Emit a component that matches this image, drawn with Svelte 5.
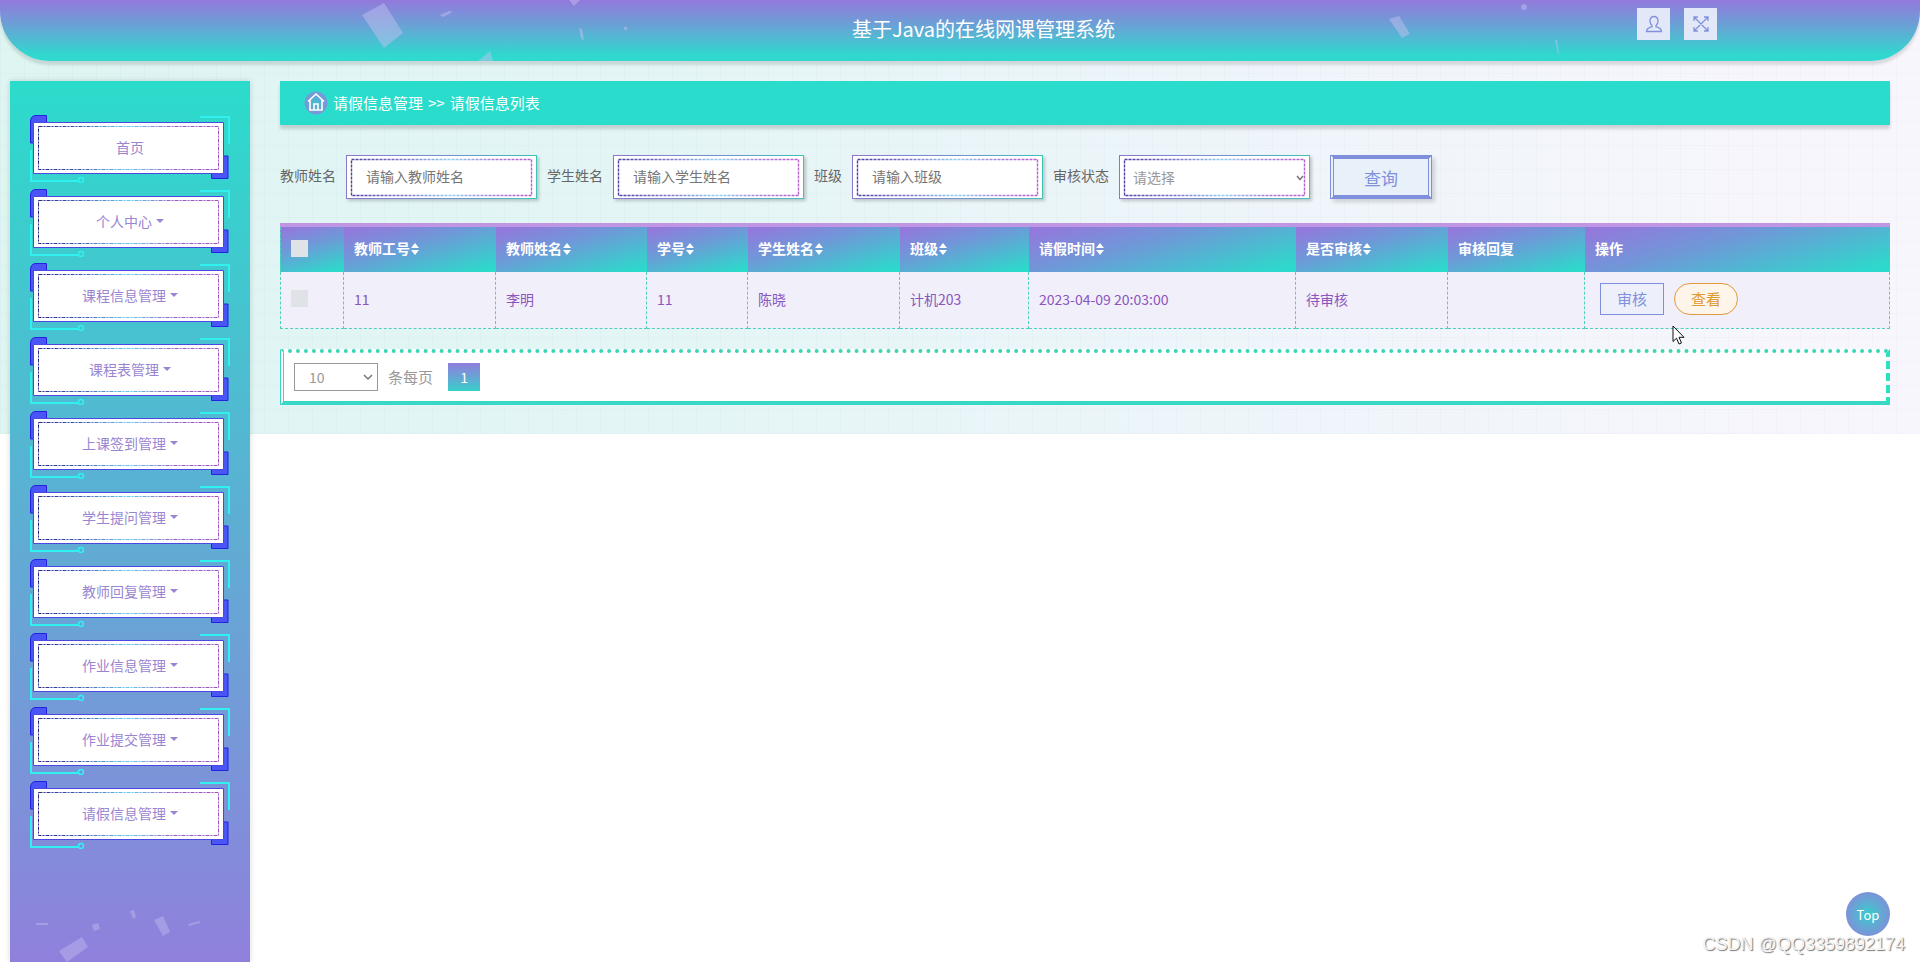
<script lang="ts">
	interface MenuItem {
		label: string;
		expandable: boolean;
	}

	interface Column {
		key: string;
		label: string;
		sortable: boolean;
		width: number;
	}

	const menu: MenuItem[] = [
		{ label: '首页', expandable: false },
		{ label: '个人中心', expandable: true },
		{ label: '课程信息管理', expandable: true },
		{ label: '课程表管理', expandable: true },
		{ label: '上课签到管理', expandable: true },
		{ label: '学生提问管理', expandable: true },
		{ label: '教师回复管理', expandable: true },
		{ label: '作业信息管理', expandable: true },
		{ label: '作业提交管理', expandable: true },
		{ label: '请假信息管理', expandable: true },
	];

	const columns: Column[] = [
		{ key: 'teacherNo', label: '教师工号', sortable: true, width: 152 },
		{ key: 'teacherName', label: '教师姓名', sortable: true, width: 151 },
		{ key: 'studentNo', label: '学号', sortable: true, width: 101 },
		{ key: 'studentName', label: '学生姓名', sortable: true, width: 152 },
		{ key: 'className', label: '班级', sortable: true, width: 129 },
		{ key: 'leaveTime', label: '请假时间', sortable: true, width: 267 },
		{ key: 'status', label: '是否审核', sortable: true, width: 152 },
		{ key: 'reply', label: '审核回复', sortable: false, width: 137 },
	];

	const rows: Record<string, string>[] = [
		{
			teacherNo: '11',
			teacherName: '李明',
			studentNo: '11',
			studentName: '陈晓',
			className: '计机203',
			leaveTime: '2023-04-09 20:03:00',
			status: '待审核',
			reply: '',
		},
	];

	const textFilters = [
		{ id: 'teacher', label: '教师姓名', placeholder: '请输入教师姓名' },
		{ id: 'student', label: '学生姓名', placeholder: '请输入学生姓名' },
		{ id: 'class', label: '班级', placeholder: '请输入班级' },
	];

	let filters = $state<Record<string, string>>({ teacher: '', student: '', class: '' });
	let auditStatus = $state('');
	let pageSize = $state('10');
	let selected = $state<boolean[]>(rows.map(() => false));

	let allSelected = $derived(selected.every(Boolean));

	function toggleAll() {
		const next = !allSelected;
		selected = rows.map(() => next);
	}

	function scrollTop() {
		window.scrollTo({ top: 0, behavior: 'smooth' });
	}
</script>

<div class="page">
	<header class="topbar">
		<svg class="confetti" width="1600" height="61" viewBox="0 0 1600 61" aria-hidden="true">
			<g fill="#c9c4f2" fill-opacity="0.45">
				<path d="M384 3 403 33 384 48 362 15z" />
				<path d="M440 15 449 11 453 12 443 17z" />
				<path d="M569 0H580L574 6z" />
				<path d="M478 61 490 51 493 61z" />
				<path d="M579 28 582 29 584 40 581 39z" />
				<path d="M624 27h3v3h-3z" />
				<path d="M1389 19 1399 16 1410 34 1402 38z" />
				<circle cx="1524" cy="7" r="3" />
				<path d="M1555 40h2l2 14h-1z" />
			</g>
		</svg>
		<h1>基于Java的在线网课管理系统</h1>
		<div class="tools">
			<button class="tool" aria-label="个人中心">
				<svg width="18" height="18" viewBox="0 0 18 18">
					<path d="M9 1.500c-2.600 0-4 1.900-4 4.400 0 2 .8 3.700 2 4.600v1.200c-2.700.7-5.300 1.900-5.500 4.800h15c-.2-2.900-2.800-4.100-5.500-4.800v-1.200c1.200-.9 2-2.600 2-4.600 0-2.500-1.400-4.400-4-4.400z" />
				</svg>
			</button>
			<button class="tool" aria-label="全屏">
				<svg width="18" height="18" viewBox="0 0 18 18">
					<path d="M2 2 16 16M16 2 2 16M2 6V2H6M12 2h4v4M16 12v4h-4M6 16H2v-4" />
				</svg>
			</button>
		</div>
	</header>

	<div class="body">
		<aside class="sidebar">
			<nav>
				<ul>
					{#each menu as item}
						<li>
							<a href="#menu">
								{item.label}{#if item.expandable}<span class="caret"></span>{/if}
							</a>
						</li>
					{/each}
				</ul>
			</nav>
		</aside>

		<main>
			<div class="breadcrumb">
				<svg width="24" height="24" viewBox="0 0 24 24" aria-hidden="true">
					<defs>
						<radialGradient id="home-glow">
							<stop offset="0" stop-color="#3fc0d0" />
							<stop offset="0.7" stop-color="#6f9ed8" />
							<stop offset="0.9" stop-color="#8f86dc" stop-opacity="0.8" />
							<stop offset="1" stop-color="#8f86dc" stop-opacity="0" />
						</radialGradient>
					</defs>
					<circle cx="12" cy="12" r="12" fill="url(#home-glow)" />
					<path d="M4 10.500 12 3l8 7.500M6 9v10h12V9M10 19v-6h4v6" fill="none" stroke="#fff" stroke-width="1.600" />
				</svg>
				<span>请假信息管理</span>
				<span>&gt;&gt;</span>
				<span>请假信息列表</span>
			</div>

			<form class="filters" onsubmit={(e) => e.preventDefault()}>
				{#each textFilters as f}
					<label for={f.id}>{f.label}</label>
					<input class="field" id={f.id} type="text" placeholder={f.placeholder} bind:value={filters[f.id]} />
				{/each}
				<label for="audit">审核状态</label>
				<select class="field" id="audit" bind:value={auditStatus}>
					<option value="">请选择</option>
					<option value="pass">通过</option>
					<option value="reject">不通过</option>
				</select>
				<button class="query" type="submit">查询</button>
			</form>

			<table>
				<colgroup>
					<col style="width: 64px" />
					{#each columns as col}
						<col style="width: {col.width}px" />
					{/each}
					<col />
				</colgroup>
				<thead>
					<tr>
						<th><input type="checkbox" aria-label="全选" checked={allSelected} onchange={toggleAll} /></th>
						{#each columns as col}
							<th>
								{col.label}{#if col.sortable}<svg class="sort" width="10" height="12" viewBox="0 0 10 12" aria-hidden="true"><path d="M5 0 9 5H1zM5 12 1 7h8z" fill="#fff" /></svg>{/if}
							</th>
						{/each}
						<th>操作</th>
					</tr>
				</thead>
				<tbody>
					{#each rows as row, i}
						<tr>
							<td><input type="checkbox" aria-label="选择" bind:checked={selected[i]} /></td>
							{#each columns as col}
								<td>{row[col.key]}</td>
							{/each}
							<td>
								<div class="ops">
									<button class="audit">审核</button>
									<button class="view">查看</button>
								</div>
							</td>
						</tr>
					{/each}
				</tbody>
			</table>

			<div class="pager">
				<select id="page-size" bind:value={pageSize}>
					<option value="10">10</option>
					<option value="25">25</option>
					<option value="50">50</option>
				</select>
				<label for="page-size">条每页</label>
				<button class="current">1</button>
			</div>
		</main>
	</div>

	<button class="to-top" onclick={scrollTop}>Top</button>
	<div class="watermark">CSDN @QQ3359892174</div>
	<svg class="pointer" width="13" height="20" viewBox="0 0 13 20" aria-hidden="true">
		<path d="M1 1v15.500l3.500-3.300L7 19l2.500-1L7 12.300h5z" fill="#fff" stroke="#111" />
	</svg>
</div>

<style>
	:global(body) {
		background: #fff;
	}

	.page {
		--teal: #2bdccb;
		--blue: #7f8fdc;
		--purple: #9379dc;
		--field-frame: url("data:image/svg+xml,%3Csvg xmlns='http://www.w3.org/2000/svg' width='189' height='42' fill='none'%3E%3Cdefs%3E%3ClinearGradient id='g' gradientUnits='userSpaceOnUse' x1='4' y1='0' x2='184' y2='0'%3E%3Cstop offset='0' stop-color='%234a40a8'/%3E%3Cstop offset='.3' stop-color='%238078cc'/%3E%3Cstop offset='.55' stop-color='%2390d0f0'/%3E%3Cstop offset='.8' stop-color='%23a880d4'/%3E%3Cstop offset='1' stop-color='%23b860cc'/%3E%3C/linearGradient%3E%3C/defs%3E%3Cpath d='M4.500 3.500H184.500V39.500H4.500z' stroke='url(%23g)' stroke-width='1.400' stroke-dasharray='3 1'/%3E%3C/svg%3E");
		position: relative;
		display: flex;
		flex-direction: column;
		min-height: 100vh;
		overflow: hidden;
		background:
			repeating-linear-gradient(90deg, rgba(120, 150, 180, 0.04) 0 1px, transparent 1px 24px) 0 0 / 100% 434px no-repeat,
			repeating-linear-gradient(0deg, rgba(120, 150, 180, 0.04) 0 1px, transparent 1px 24px) 0 0 / 100% 434px no-repeat,
			linear-gradient(85deg, #def5f2 0%, #e4f5f6 35%, #eef5fa 65%, #f8f6fd 95%) 0 0 / 100% 434px no-repeat;
		font-family: 'Noto Sans CJK SC', sans-serif;
		font-size: 14px;
		line-height: 20px;
	}

	button,
	input,
	select {
		box-sizing: border-box;
		margin: 0;
		font-family: inherit;
		cursor: pointer;
	}

	.topbar {
		position: relative;
		display: flex;
		align-items: flex-start;
		height: 61px;
		background: linear-gradient(180deg, #9379dc 0%, #6ba0d6 40%, #30d8cf 90%);
		border-radius: 0 0 50px 50px;
		box-shadow: 0 4px 3px rgba(0, 0, 0, 0.12);
	}

	.confetti {
		position: absolute;
		top: 0;
		left: 0;
	}

	h1 {
		flex: 1;
		margin: 0;
		padding-left: 330px;
		color: #fff;
		font-size: 20px;
		font-weight: 400;
		line-height: 58px;
		text-align: center;
	}

	.tools {
		display: flex;
		gap: 14px;
		padding: 8px 203px 0 0;
	}

	.tool {
		display: flex;
		align-items: center;
		justify-content: center;
		width: 33px;
		height: 32px;
		padding: 0;
		background: #e2e8f8;
		border: none;
	}

	.tool path {
		fill: none;
		stroke: #8090dc;
		stroke-width: 1.3;
	}

	.body {
		display: flex;
		flex: 1;
		gap: 30px;
		padding: 20px 30px 0 10px;
	}

	.sidebar {
		flex: 0 0 200px;
		padding: 34px 20px 0;
		background:
			url("data:image/svg+xml,%3Csvg xmlns='http://www.w3.org/2000/svg' width='240' height='62' fill='%23c9c4f2' fill-opacity='.4'%3E%3Cpath d='M49 51 72 37 78 47 57 62zM144 20 153 16 160 32 153 36zM120 11 124 10 126 17 123 19zM82 25 88 23 90 29 84 31zM26 23H38V25H26zM178 24 190 21V23L179 26z'/%3E%3C/svg%3E") 0 100% no-repeat,
			linear-gradient(180deg, var(--teal) 0%, #9080dc 100%);
		box-shadow: 0 0 6px rgba(0, 0, 0, 0.15);
	}

	ul {
		display: flex;
		flex-direction: column;
		gap: 6px;
		margin: 0;
		padding: 0;
		list-style: none;
	}

	li a {
		display: block;
		height: 68px;
		color: #9a86d0;
		line-height: 65px;
		text-align: center;
		text-decoration: none;
		background: url("data:image/svg+xml,%3Csvg xmlns='http://www.w3.org/2000/svg' width='200' height='68' fill='none'%3E%3Cdefs%3E%3ClinearGradient id='g' gradientUnits='userSpaceOnUse' x1='8' y1='0' x2='188' y2='0'%3E%3Cstop offset='0' stop-color='%232a2a90'/%3E%3Cstop offset='.25' stop-color='%234060b0'/%3E%3Cstop offset='.5' stop-color='%2360c8f0'/%3E%3Cstop offset='.75' stop-color='%239060c0'/%3E%3Cstop offset='1' stop-color='%23a050c0'/%3E%3C/linearGradient%3E%3C/defs%3E%3Cpath d='M.5 28V6Q1 .5 6 .5H16.500V28z' fill='%234a55f5' stroke='%232422e0'/%3E%3Cpath d='M181.500 41H198V63.500H181.500z' fill='%234a55f5' stroke='%232422e0'/%3E%3Cpath d='M170 2H199V29M1 35V66H49' stroke='%2330f0f0' stroke-width='2'/%3E%3Ccircle cx='51' cy='65' r='2.500' stroke='%2330f0f0' stroke-width='1.500'/%3E%3Cpath d='M3.500 7.500H193.500V58.500H3.500z' fill='%23fff' stroke='%234a48e0'/%3E%3Cpath d='M8.500 11.500H188.500V54.500H8.500z' stroke='url(%23g)' stroke-dasharray='4 1 2 1'/%3E%3C/svg%3E") no-repeat;
	}

	.caret {
		display: inline-block;
		margin-left: 4px;
		vertical-align: 4px;
		border-top: 4px solid;
		border-right: 4px solid transparent;
		border-left: 4px solid transparent;
	}

	main {
		flex: 1;
		min-width: 0;
	}

	.breadcrumb {
		display: flex;
		align-items: center;
		gap: 5px;
		height: 44px;
		padding-left: 24px;
		color: #fff;
		font-size: 15px;
		background: #2adccb;
		box-shadow: 0 4px 3px rgba(0, 0, 0, 0.15);
	}

	.filters {
		display: flex;
		align-items: center;
		gap: 10px;
		margin: 30px 0 24px;
		color: #666;
	}

	.filters label {
		padding-bottom: 4px;
	}

	.field {
		width: 191px;
		height: 44px;
		padding: 0 19px 2px;
		color: #757575;
		font-size: 14px;
		background: #fff var(--field-frame) no-repeat;
		border: 1px solid;
		border-image: linear-gradient(90deg, #8a78cc, #6f96cc 60%, #3cc4b8) 1;
		box-shadow: 2px 2px 3px rgba(0, 0, 0, 0.2);
		outline: none;
	}

	.field::placeholder {
		color: #757575;
		opacity: 1;
	}

	select {
		appearance: none;
	}

	select.field {
		padding: 0 13px;
		color: #999;
		background:
			url("data:image/svg+xml,%3Csvg xmlns='http://www.w3.org/2000/svg' width='8' height='6' fill='none' stroke='%23777' stroke-width='1.500'%3E%3Cpath d='M1 1 4 4.500 7 1'/%3E%3C/svg%3E") 176px 19px no-repeat,
			#fff var(--field-frame) no-repeat;
	}

	.query {
		width: 102px;
		height: 44px;
		margin-left: 10px;
		padding: 0;
		color: var(--blue);
		font-size: 17px;
		background: #e8f1fa;
		border-color: var(--blue);
		border-style: solid double;
		border-width: 4px;
		box-shadow: 3px 3px 4px rgba(0, 0, 0, 0.15);
	}

	table {
		width: 100%;
		table-layout: fixed;
		border-spacing: 0;
		border-top: 4px solid #c095e4;
	}

	th,
	td {
		box-sizing: border-box;
		padding: 0 10px 3px;
		text-align: left;
		white-space: nowrap;
	}

	th {
		height: 45px;
		color: #fff;
		font-weight: 700;
		background: linear-gradient(165deg, var(--purple) 5%, #6f98d8 40%, #2cdacb 95%);
	}

	td {
		height: 57px;
		color: #8b55c0;
		background: #f0effa;
		border-right: 1px dashed #4fd0b8;
		border-bottom: 1px dashed #4fd0b8;
	}

	th:first-child,
	td:first-child {
		border-left: 1px dashed #4fd0b8;
	}

	.sort {
		vertical-align: -1px;
	}

	input[type='checkbox'] {
		display: block;
		width: 17px;
		height: 17px;
		appearance: none;
		background: #dfe2e6;
	}

	input[type='checkbox']:checked {
		background: var(--blue);
	}

	.ops {
		display: flex;
		gap: 10px;
		padding-left: 5px;
	}

	.ops button {
		width: 64px;
		height: 32px;
		padding: 0;
		font-size: 15px;
	}

	.audit {
		color: var(--blue);
		background: #edf0fb;
		border: 1px solid var(--blue);
	}

	.view {
		color: #e09a30;
		background: #fdf5ea;
		border: 1px solid #e09a40;
		border-radius: 16px;
	}

	.pager {
		display: flex;
		align-items: center;
		gap: 10px;
		box-sizing: border-box;
		height: 56px;
		margin-top: 20px;
		padding-left: 10px;
		color: #999;
		font-size: 15px;
		background: #fff;
		border-color: #3ad6b8 #2ee0c0 #38d8c6 #3ad6c0;
		border-style: dotted dashed solid double;
		border-width: 4px;
	}

	.pager select {
		width: 84px;
		height: 28px;
		padding: 0 14px;
		color: #999;
		font-size: 14px;
		background: #fff url("data:image/svg+xml,%3Csvg xmlns='http://www.w3.org/2000/svg' width='10' height='7' fill='none' stroke='%23777' stroke-width='1.500'%3E%3Cpath d='M1 1 5 5 9 1'/%3E%3C/svg%3E") 68px 10px no-repeat;
		border: 1px solid #999;
	}

	.current {
		width: 32px;
		height: 28px;
		margin-left: 5px;
		padding: 0;
		color: #fff;
		font-size: 14px;
		background: linear-gradient(180deg, #8f7edc, #6ba0d6 45%, #38d0cc);
		border: none;
	}

	.to-top {
		position: absolute;
		right: 30px;
		bottom: 26px;
		width: 44px;
		height: 44px;
		padding: 0;
		color: #fff;
		font-size: 13px;
		background: radial-gradient(circle, #38cccc 0%, #7c93d8 70%);
		border: none;
		border-radius: 50%;
	}

	.watermark {
		position: absolute;
		right: 15px;
		bottom: 8px;
		color: #f4f4f4;
		font-family: 'Liberation Sans', sans-serif;
		font-size: 18px;
		text-shadow: 1px 1px 1px #777;
	}

	.pointer {
		position: absolute;
		top: 325px;
		left: 1672px;
	}
</style>
